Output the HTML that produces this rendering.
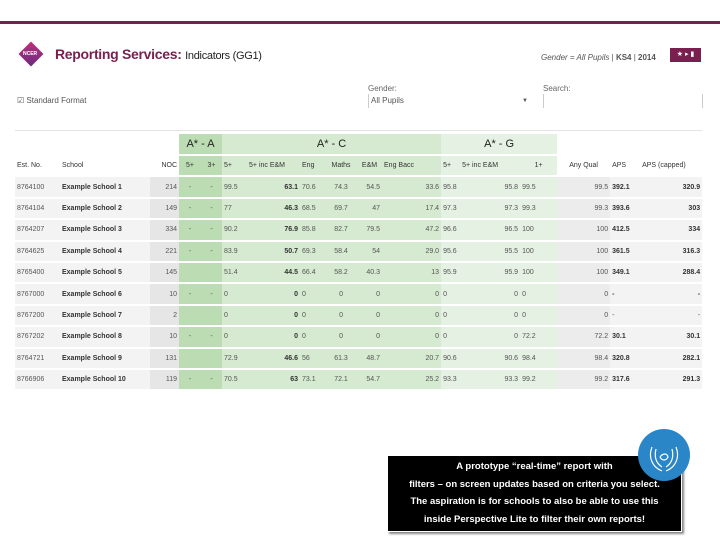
<!DOCTYPE html>
<html><head><meta charset="utf-8">
<style>
body{margin:0;width:720px;height:540px;background:#fff;position:relative;overflow:hidden;font-family:"Liberation Sans",sans-serif;}
.a{position:absolute;white-space:nowrap}
table{position:absolute;left:15px;top:132px;border-collapse:separate;border-spacing:0 2px;table-layout:fixed;width:687px;font-size:7px;color:#555;}
td,th{padding:0 2px;height:19.4px;overflow:hidden;white-space:nowrap;}
th{font-weight:normal;color:#333;}
tr.g th{font-size:11px;color:#222;height:20px}
tbody td{background:#f3f3f3}
td.n{background:#e6e6e6;text-align:right}
td.aa{background:#bcdcb4;text-align:center}
td.ac{background:#d5ead0}
td.ag{background:#e5f1e2}
td.q{background:#ececec;text-align:right}
.b{font-weight:bold;color:#333}
.r{text-align:right}.c{text-align:center}
</style></head><body>
<div class="a" style="left:0;top:21px;width:720px;height:3px;background:#7a1f4f"></div>
<div class="a" style="left:20px;top:43px;width:22px;height:22px;background:linear-gradient(135deg,#c0307a,#6a2a80);transform:rotate(45deg) scale(0.8)"></div>
<div class="a" style="left:23px;top:51px;font-size:5px;color:#fff;font-weight:bold">NCER</div>
<div class="a" style="left:55px;top:46px;font-size:14px;color:#7a1f4f;font-weight:bold;letter-spacing:-0.3px">Reporting Services: <span style="color:#222;font-size:11px;font-weight:normal">Indicators (GG1)</span></div>
<div class="a" style="left:541px;top:53px;font-size:8px;color:#555"><i>Gender = All Pupils</i> | <b>KS4</b> | <b>2014</b></div>
<div class="a" style="left:670px;top:48px;width:31px;height:14px;background:#7a1f4f;color:#fff;font-size:7px;text-align:center;line-height:14px">&#9733; &#9656; ▮</div>
<div class="a" style="left:17px;top:96px;font-size:8px;color:#555">☑ Standard Format</div>
<div class="a" style="left:368px;top:84px;font-size:8px;color:#666">Gender:</div>
<div class="a" style="left:368px;top:94px;width:157px;height:14px;border-left:1px solid #ccc;font-size:8px;color:#555;line-height:14px;padding-left:2px">All Pupils<span style="float:right;font-size:6px">▼</span></div>
<div class="a" style="left:543px;top:84px;font-size:8px;color:#666">Search:</div>
<div class="a" style="left:543px;top:94px;width:158px;height:14px;border-left:1px solid #ccc;border-right:1px solid #ccc"></div>
<div class="a" style="left:15px;top:130px;width:687px;height:1px;background:#e4e4e4"></div>
<table>
<colgroup><col style="width:45px"><col style="width:90px"><col style="width:29px"><col style="width:22px"><col style="width:21px"><col style="width:25px"><col style="width:53px"><col style="width:25px"><col style="width:32px"><col style="width:25px"><col style="width:59px"><col style="width:19px"><col style="width:60px"><col style="width:37px"><col style="width:53px"><col style="width:30px"><col style="width:62px"></colgroup>
<thead>
<tr class="g"><th colspan="3"></th><th colspan="2" style="background:#bcdcb4">A* - A</th><th colspan="6" style="background:#d5ead0">A* - C</th><th colspan="3" style="background:#e5f1e2">A* - G</th><th colspan="3"></th></tr>
<tr><th style="text-align:left">Est. No.</th><th style="text-align:left">School</th><th class="r">NOC</th><th style="background:#bcdcb4">5+</th><th style="background:#bcdcb4">3+</th><th style="background:#d5ead0;text-align:left">5+</th><th style="background:#d5ead0;text-align:left">5+ inc E&amp;M</th><th style="background:#d5ead0;text-align:left">Eng</th><th style="background:#d5ead0">Maths</th><th style="background:#d5ead0">E&amp;M</th><th style="background:#d5ead0;text-align:left">Eng Bacc</th><th style="background:#e5f1e2;text-align:left">5+</th><th style="background:#e5f1e2;text-align:left">5+ inc E&amp;M</th><th style="background:#e5f1e2">1+</th><th>Any Qual</th><th style="text-align:left">APS</th><th style="text-align:left">APS (capped)</th></tr>
</thead>
<tbody>
<tr><td>8764100</td><td class="b">Example School 1</td><td class="n">214</td><td class="aa">-</td><td class="aa">-</td><td class="ac">99.5</td><td class="ac r b">63.1</td><td class="ac">70.6</td><td class="ac c">74.3</td><td class="ac r">54.5</td><td class="ac r">33.6</td><td class="ag">95.8</td><td class="ag r">95.8</td><td class="ag">99.5</td><td class="q">99.5</td><td class="b">392.1</td><td class="r b">320.9</td></tr>
<tr><td>8764104</td><td class="b">Example School 2</td><td class="n">149</td><td class="aa">-</td><td class="aa">-</td><td class="ac">77</td><td class="ac r b">46.3</td><td class="ac">68.5</td><td class="ac c">69.7</td><td class="ac r">47</td><td class="ac r">17.4</td><td class="ag">97.3</td><td class="ag r">97.3</td><td class="ag">99.3</td><td class="q">99.3</td><td class="b">393.6</td><td class="r b">303</td></tr>
<tr><td>8764207</td><td class="b">Example School 3</td><td class="n">334</td><td class="aa">-</td><td class="aa">-</td><td class="ac">90.2</td><td class="ac r b">76.9</td><td class="ac">85.8</td><td class="ac c">82.7</td><td class="ac r">79.5</td><td class="ac r">47.2</td><td class="ag">96.6</td><td class="ag r">96.5</td><td class="ag">100</td><td class="q">100</td><td class="b">412.5</td><td class="r b">334</td></tr>
<tr><td>8764625</td><td class="b">Example School 4</td><td class="n">221</td><td class="aa">-</td><td class="aa">-</td><td class="ac">83.9</td><td class="ac r b">50.7</td><td class="ac">69.3</td><td class="ac c">58.4</td><td class="ac r">54</td><td class="ac r">29.0</td><td class="ag">95.6</td><td class="ag r">95.5</td><td class="ag">100</td><td class="q">100</td><td class="b">361.5</td><td class="r b">316.3</td></tr>
<tr><td>8765400</td><td class="b">Example School 5</td><td class="n">145</td><td class="aa"></td><td class="aa"></td><td class="ac">51.4</td><td class="ac r b">44.5</td><td class="ac">66.4</td><td class="ac c">58.2</td><td class="ac r">40.3</td><td class="ac r">13</td><td class="ag">95.9</td><td class="ag r">95.9</td><td class="ag">100</td><td class="q">100</td><td class="b">349.1</td><td class="r b">288.4</td></tr>
<tr><td>8767000</td><td class="b">Example School 6</td><td class="n">10</td><td class="aa">-</td><td class="aa">-</td><td class="ac">0</td><td class="ac r b">0</td><td class="ac">0</td><td class="ac c">0</td><td class="ac r">0</td><td class="ac r">0</td><td class="ag">0</td><td class="ag r">0</td><td class="ag">0</td><td class="q">0</td><td class="b">-</td><td class="r b">-</td></tr>
<tr><td>8767200</td><td class="b">Example School 7</td><td class="n">2</td><td class="aa"></td><td class="aa"></td><td class="ac">0</td><td class="ac r b">0</td><td class="ac">0</td><td class="ac c">0</td><td class="ac r">0</td><td class="ac r">0</td><td class="ag">0</td><td class="ag r">0</td><td class="ag">0</td><td class="q">0</td><td>-</td><td class="r">-</td></tr>
<tr><td>8767202</td><td class="b">Example School 8</td><td class="n">10</td><td class="aa">-</td><td class="aa">-</td><td class="ac">0</td><td class="ac r b">0</td><td class="ac">0</td><td class="ac c">0</td><td class="ac r">0</td><td class="ac r">0</td><td class="ag">0</td><td class="ag r">0</td><td class="ag">72.2</td><td class="q">72.2</td><td class="b">30.1</td><td class="r b">30.1</td></tr>
<tr><td>8764721</td><td class="b">Example School 9</td><td class="n">131</td><td class="aa"></td><td class="aa"></td><td class="ac">72.9</td><td class="ac r b">46.6</td><td class="ac">56</td><td class="ac c">61.3</td><td class="ac r">48.7</td><td class="ac r">20.7</td><td class="ag">90.6</td><td class="ag r">90.6</td><td class="ag">98.4</td><td class="q">98.4</td><td class="b">320.8</td><td class="r b">282.1</td></tr>
<tr><td>8766906</td><td class="b">Example School 10</td><td class="n">119</td><td class="aa">-</td><td class="aa">-</td><td class="ac">70.5</td><td class="ac r b">63</td><td class="ac">73.1</td><td class="ac c">72.1</td><td class="ac r">54.7</td><td class="ac r">25.2</td><td class="ag">93.3</td><td class="ag r">93.3</td><td class="ag">99.2</td><td class="q">99.2</td><td class="b">317.6</td><td class="r b">291.3</td></tr>
</tbody></table>
<div class="a" style="left:387px;top:455px;width:293px;height:73px;background:#000;border:1px solid #fff;box-shadow:2px 2px 2px #888;color:#fff;font-size:9.5px;font-weight:bold;text-align:center;line-height:17.5px;padding-top:2px;white-space:normal">A prototype “real-time” report with<br>filters – on screen updates based on criteria you select.<br>The aspiration is for schools to also be able to use this<br>inside Perspective Lite to filter their own reports!</div>
<div class="a" style="left:638px;top:429px;width:52px;height:52px;border-radius:50%;background:#2b86c8"></div>
<svg class="a" style="left:638px;top:429px" width="52" height="52" viewBox="0 0 52 52" fill="none" stroke="#fff" stroke-width="1.2"><path d="M14 18 C10 28 14 38 24 42 M38 18 C42 28 38 38 28 42 M18 20 C16 28 18 34 24 38 M34 20 C36 28 34 34 28 38 M22 28 C25 24 29 24 30 28 C28 32 24 32 22 28"/></svg>
</body></html>
